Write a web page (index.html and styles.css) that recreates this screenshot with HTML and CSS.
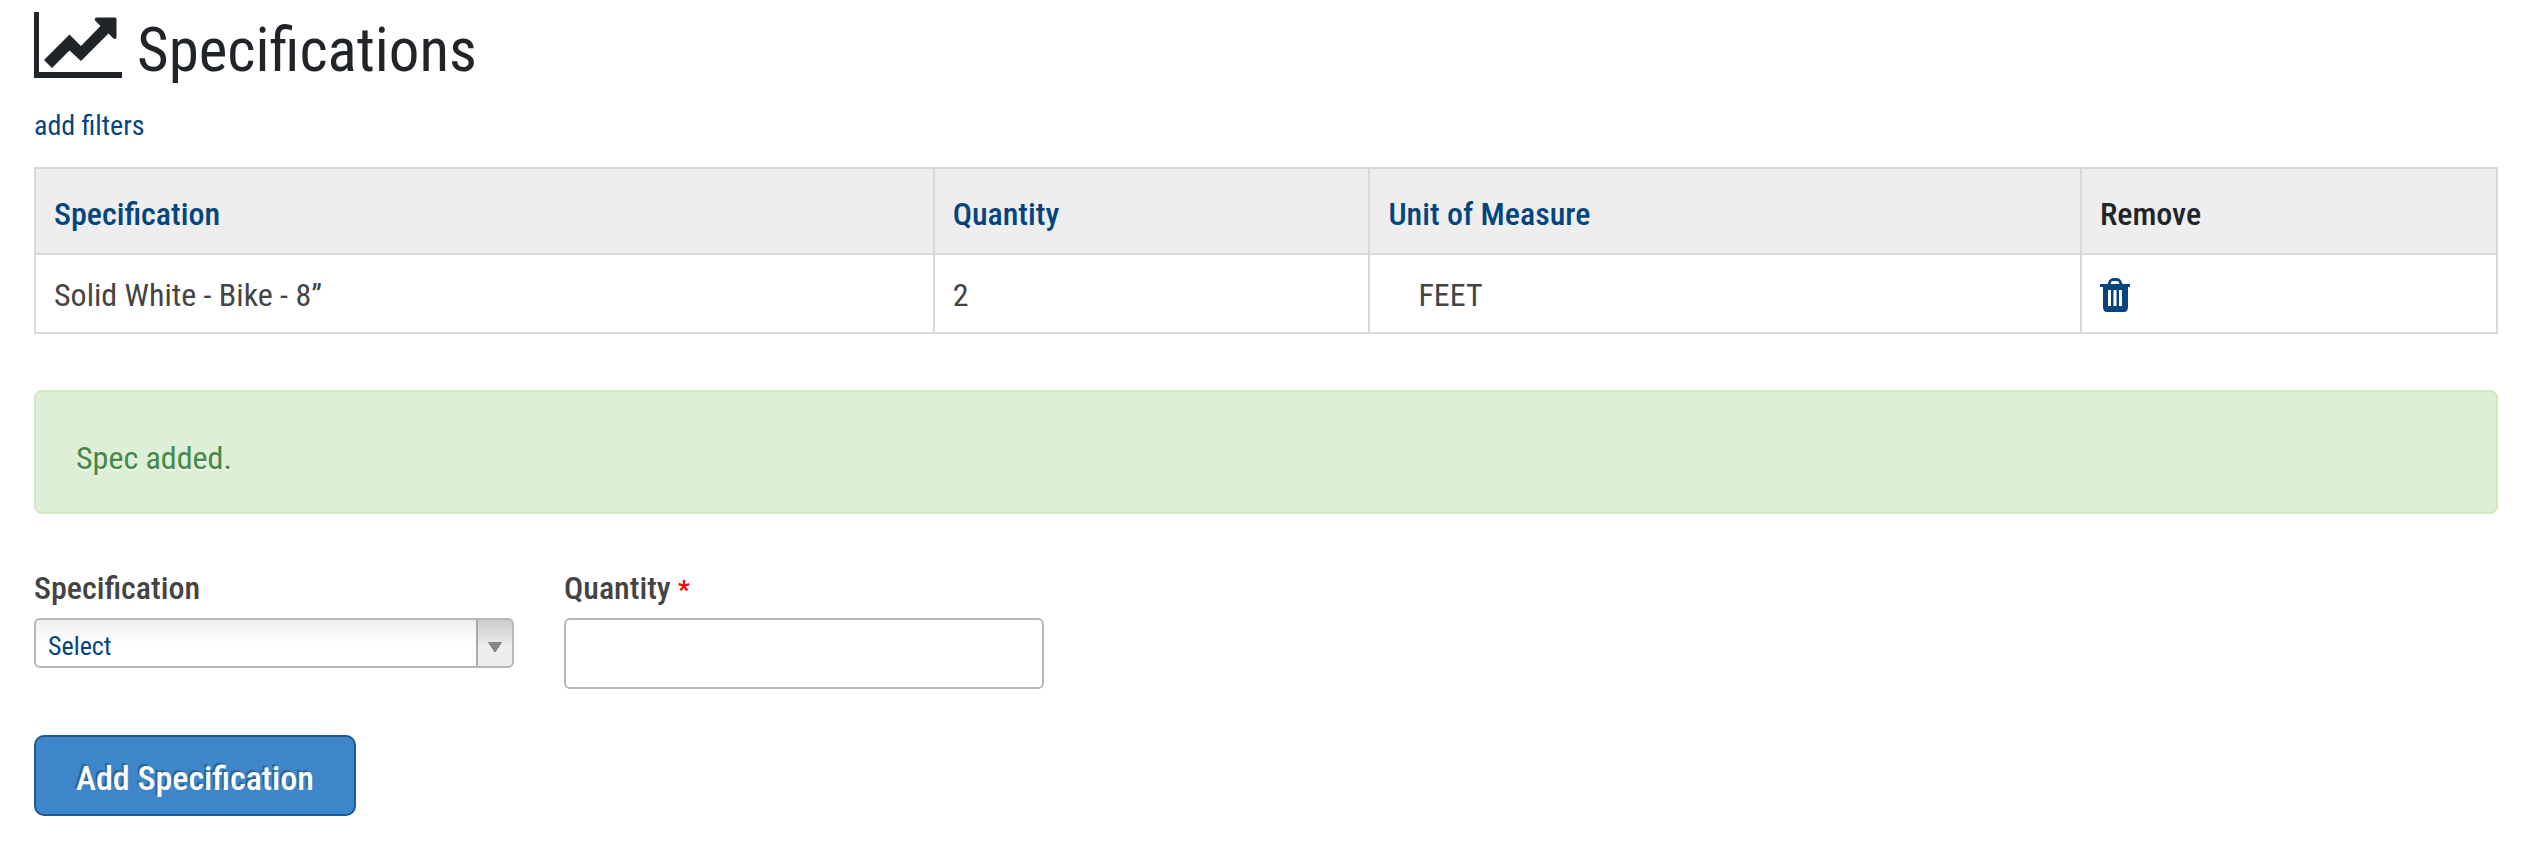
FILE: index.html
```html
<!DOCTYPE html>
<html lang="en">
<head>
<meta charset="utf-8">
<title>Specifications</title>
<link rel="stylesheet" href="styles.css">
</head>
<body>
<main class="page">
  <h1 class="title">
    <svg class="title-icon" viewBox="0 0 88 66" aria-hidden="true">
      <path d="M0 0h5v60h83v6H0z"/>
      <path d="M10 48 35.500 22.500 47 34 66.500 14 61 8.500Q60 6 62.500 5.500H81Q82.500 5.500 82.500 7V25Q82 28 79.500 26.500L74.500 21.500 47 49 35.500 38.500 18 56z"/>
    </svg>
    <span>Specifications</span>
  </h1>
  <a class="filters" href="#">add filters</a>

  <table class="specs">
    <colgroup><col class="col-spec"><col class="col-qty"><col class="col-unit"><col class="col-remove"></colgroup>
    <thead>
      <tr>
        <th scope="col"><a href="#">Specification</a></th>
        <th scope="col"><a href="#">Quantity</a></th>
        <th scope="col"><a href="#">Unit of Measure</a></th>
        <th scope="col">Remove</th>
      </tr>
    </thead>
    <tbody>
      <tr>
        <td>Solid White - Bike - 8”</td>
        <td>2</td>
        <td class="unit">FEET</td>
        <td>
          <a class="remove" href="#" aria-label="Remove">
            <svg viewBox="0 0 30 34" aria-hidden="true">
              <path fill-rule="evenodd" d="M0 6h7.500L9 2.500Q10.500 0 13 0h4q3 0 4 2.500L22.500 6H30v3h-2v20q0 5-4 5H7q-4 0-4-5V9H0zM10.500 6h9L18.500 3.500Q18 3 17 3h-4q-1 0-1.500.5zM8 12v16h3V12zm5.500 0v16h3V12zm5.500 0v16h3V12z"/>
            </svg>
          </a>
        </td>
      </tr>
    </tbody>
  </table>

  <div class="alert" role="status">Spec added.</div>

  <form>
    <div class="fields">
      <div class="field">
        <label for="spec">Specification</label>
        <select id="spec" class="control select"><option>Select</option></select>
      </div>
      <div class="field">
        <label for="qty">Quantity <span class="required">*</span></label>
        <input id="qty" class="control input" type="text" required>
      </div>
    </div>
    <button class="submit" type="button">Add Specification</button>
  </form>
</main>
</body>
</html>
```
FILE: styles.css
```css
* { box-sizing: border-box; }

body {
  margin: 0;
  background: #fff;
  color: #444;
  font: 32px/40px "Roboto Condensed", "Liberation Sans", sans-serif;
}

a { color: #04457e; text-decoration: none; }

.page { padding: 12px 32px 40px 34px; }

.title {
  display: flex;
  gap: 15px;
  height: 78px;
  margin: 0;
  color: #212529;
  font-size: 61px;
  font-weight: 400;
  line-height: 76px;
}

.title-icon { width: 88px; height: 66px; fill: #212529; }

.filters {
  display: block;
  width: max-content;
  margin: 16px 0 21px;
  font-size: 28px;
}

.specs {
  width: 100%;
  table-layout: fixed;
  border-collapse: collapse;
}

.col-spec { width: 36.5%; }
.col-qty { width: 17.7%; }
.col-unit { width: 28.9%; }
.col-remove { width: 16.9%; }

.specs th,
.specs td {
  border: 2px solid #d9d9d9;
  text-align: left;
}

.specs th {
  height: 86px;
  padding: 6px 18px 0;
  background: #eee;
  color: #212529;
  font-weight: 500;
}

.specs td { height: 79px; padding: 6px 18px 4px; }
.specs .unit { padding-left: 48px; }

.remove { display: block; width: 30px; }
.remove svg { display: block; width: 30px; height: 34px; fill: #04457e; }

.alert {
  margin: 56px 0 54px;
  padding: 46px 40px 34px;
  border: 2px solid #d3e9c5;
  border-radius: 8px;
  background: #deefd7;
  color: #468847;
  text-shadow: 0 2px 0 rgba(255, 255, 255, .5);
}

.fields { display: flex; align-items: flex-start; gap: 50px; }

.field { width: 480px; }
.field label { display: block; height: 40px; margin-bottom: 10px; font-weight: 500; }

.required { color: #f00; font-size: 26px; font-weight: 700; line-height: 1; }

.control {
  display: block;
  width: 100%;
  border: 2px solid #b8b8b8;
  border-radius: 6px;
  font-family: inherit;
  font-size: 26px;
}

.select {
  height: 50px;
  padding: 6px 48px 0 12px;
  appearance: none;
  color: #04457e;
  background:
    conic-gradient(from -34deg at 50% 100%, #888 0 68deg, transparent 0) right 10px top 22px / 14px 11px no-repeat,
    linear-gradient(#aaa, #aaa) right 34px top / 2px 100% no-repeat,
    linear-gradient(#ccc, #eee 60%) right / 34px 100% no-repeat,
    linear-gradient(#eee, #fff 50%);
}

.input { height: 71px; padding: 8px 12px; background: #fff; }

.submit {
  display: block;
  height: 81px;
  margin-top: 46px;
  padding: 5px 40px 0;
  border: 2px solid #1f5a93;
  border-radius: 10px;
  background: #3d86c9;
  color: #fff;
  font: 500 34px/40px "Roboto Condensed", "Liberation Sans", sans-serif;
  text-shadow: -2px -2px 0 rgba(0, 0, 0, .25);
}
```
